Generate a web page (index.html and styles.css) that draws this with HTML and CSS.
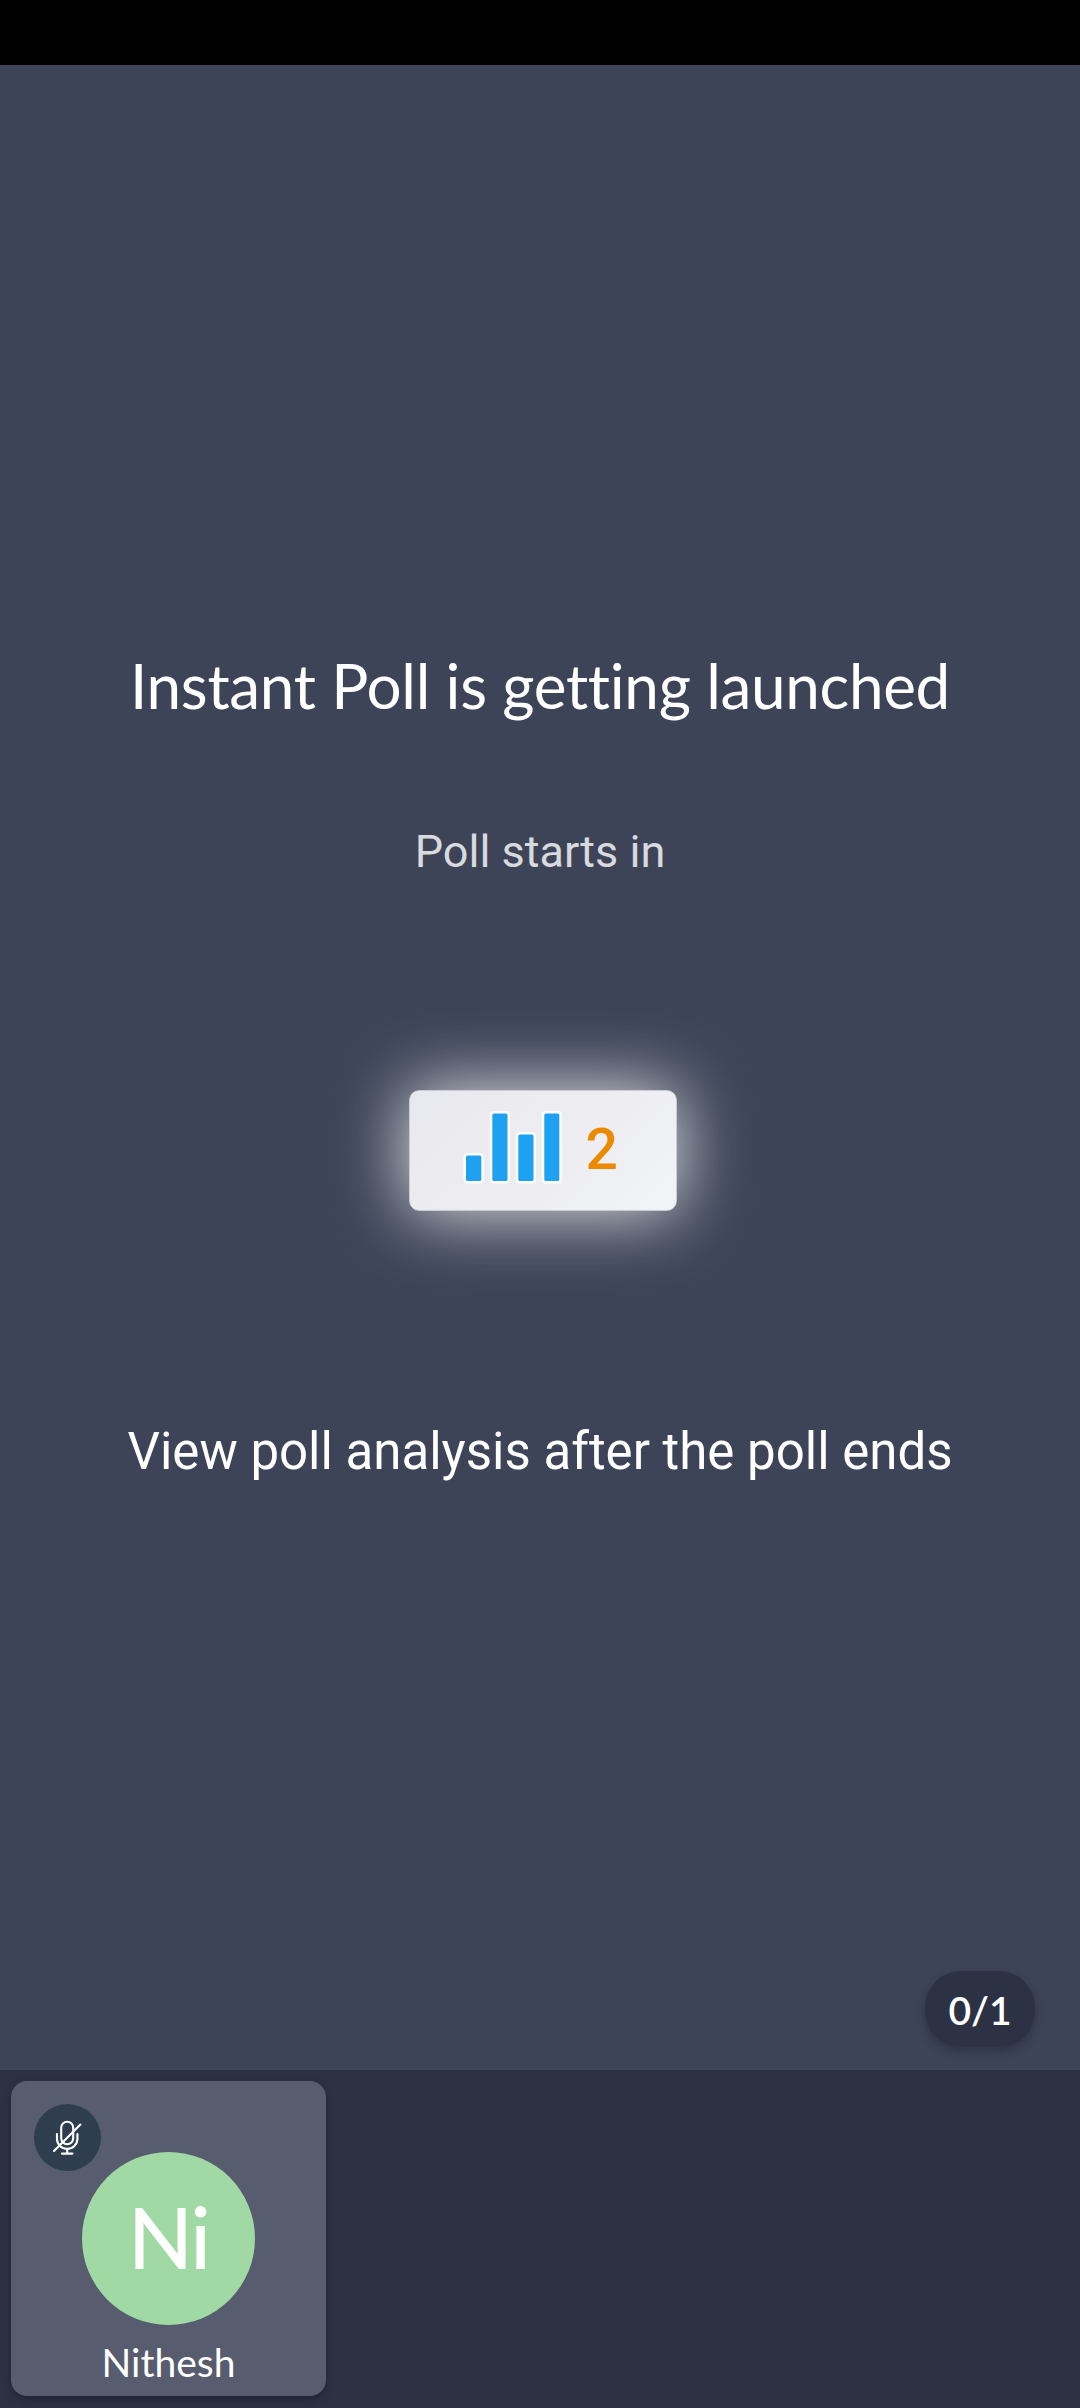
FILE: index.html
```html
<!DOCTYPE html>
<html lang="en">
<head>
<meta charset="utf-8">
<title>Instant Poll</title>
<link rel="stylesheet" href="styles.css">
</head>
<body>
<div class="screen">
  <div class="status-bar"></div>
  <main class="stage">
    <h1 class="title">Instant Poll is getting launched</h1>
    <p class="subtitle">Poll starts in</p>
    <div class="countdown">
      <svg class="bars" width="101" height="76" viewBox="0 0 101 76">
        <g fill="#1ea1f1" stroke="#fff" stroke-width="5" paint-order="stroke">
          <rect x="5" y="45.5" width="15.3" height="25.5" rx="1.5"/>
          <rect x="31.3" y="3.5" width="15.2" height="67.5" rx="1.5"/>
          <rect x="57.3" y="24.5" width="15.2" height="46.5" rx="1.5"/>
          <rect x="83.3" y="3.5" width="15" height="67.5" rx="1.5"/>
        </g>
      </svg>
      <span class="seconds">2</span>
    </div>
    <p class="note">View poll analysis after the poll ends</p>
    <div class="counter">0/1</div>
  </main>
  <footer class="strip">
    <div class="tile">
      <div class="muted">
        <svg width="67" height="67" viewBox="0 0 67 67" fill="none" stroke="#fff" stroke-width="2.1" stroke-linecap="round">
          <rect x="27.2" y="17.7" width="12" height="22.6" rx="6"/>
          <path d="M23 30v5a10.2 9.8 0 0 0 20.4 0v-5M33.2 44.8v4.6M28 49.6h10.5M20 47l26.4-26.4"/>
        </svg>
      </div>
      <div class="avatar">Ni</div>
      <div class="name">Nithesh</div>
    </div>
  </footer>
</div>
</body>
</html>
```
FILE: styles.css
```css
* { box-sizing: border-box; }
body { margin: 0; background: #3d4458; }
.screen {
  display: flex;
  flex-direction: column;
  width: 1080px;
  height: 2408px;
  color: #fff;
  font-family: Lato, sans-serif;
  font-variant-ligatures: none;
}
.status-bar { height: 65px; background: #000; }
.stage {
  display: flex;
  flex-direction: column;
  align-items: center;
  height: 2005px;
  padding: 582px 45px 23px;
  background: #3d4458;
}
.title {
  margin: 0 0 102px;
  font-size: 62px;
  font-weight: 400;
  letter-spacing: -0.3px;
  line-height: 76px;
  white-space: nowrap;
}
.subtitle {
  margin: 0 0 210.5px;
  color: #d8dade;
  font-family: Roboto, sans-serif;
  font-size: 45px;
  line-height: 54px;
}
.countdown {
  display: flex;
  align-items: flex-start;
  gap: 24px;
  width: 268px;
  height: 121px;
  margin: 0 0 211.5px 5px;
  padding: 19px 0 0 51px;
  border: 1px solid #c9cbd2;
  border-radius: 10px;
  background: linear-gradient(135deg, #e8e9ee, #edecf1 50%, #f1f4f7);
  box-shadow: 0 0 70px 2px rgba(255, 255, 255, .85);
}
.bars { flex: none; }
.seconds {
  margin-top: 7px;
  color: #eb8a00;
  font-family: Roboto, sans-serif;
  font-size: 57px;
  font-weight: 500;
  line-height: 66px;
}
.note {
  margin: 0;
  font-family: Roboto, sans-serif;
  font-size: 51px;
  line-height: 60px;
  white-space: nowrap;
}
.counter {
  align-self: flex-end;
  width: 110px;
  height: 76px;
  margin-top: auto;
  border-radius: 36px;
  background: #2c3144;
  box-shadow: 0 5px 10px rgba(30, 34, 50, .45);
  font-size: 39px;
  font-weight: 600;
  line-height: 78px;
  text-align: center;
}
.strip {
  height: 338px;
  padding: 11px;
  background: #2c3144;
}
.tile {
  position: relative;
  display: flex;
  flex-direction: column;
  align-items: center;
  width: 315px;
  height: 315px;
  padding-top: 71px;
  border-radius: 16px;
  background: #575c6e;
  box-shadow: 0 3px 7px rgba(20, 23, 36, .5);
}
.muted {
  position: absolute;
  top: 23px;
  left: 23px;
  width: 67px;
  height: 67px;
  border-radius: 50%;
  background: #2f3e4e;
}
.muted svg { display: block; }
.avatar {
  width: 173px;
  height: 173px;
  border-radius: 50%;
  background: #a0d9a3;
  font-size: 85px;
  font-weight: 500;
  letter-spacing: -2px;
  line-height: 168px;
  text-align: center;
}
.name {
  margin-top: 14px;
  font-size: 39px;
  line-height: 46px;
}
```
